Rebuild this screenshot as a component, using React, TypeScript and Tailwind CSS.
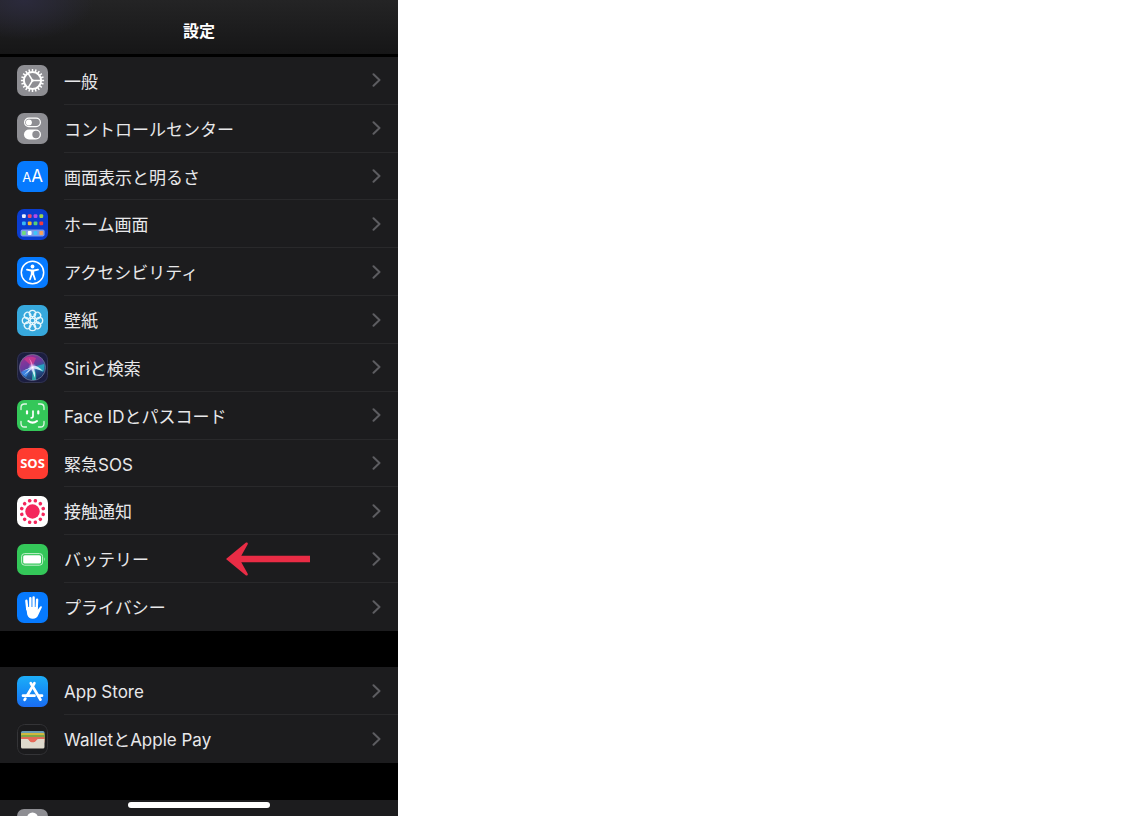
import type { ReactNode } from 'react';

type Item = {
  name: string;
  href: string;
  icon: ReactNode;
  highlighted?: boolean;
};

const angles = (count: number) => Array.from({ length: count }, (_, i) => (i * 360) / count);

const GearIcon = () => (
  <g stroke="#fff" fill="none">
    <circle cx="15.5" cy="15.5" r="8.6" strokeWidth="2" />
    {angles(20).map((a) => (
      <path key={a} d="M15.5 6.5V3.9" strokeWidth="1.5" transform={`rotate(${a} 15.5 15.5)`} />
    ))}
    <path d="M15.5 15.5H24M15.5 15.5L11 8.1M15.5 15.5L11 22.9" strokeWidth="1.5" />
    <circle cx="15.5" cy="15.5" r="1.3" fill="#fff" stroke="none" />
  </g>
);

const ControlsIcon = () => (
  <g>
    <rect x="7.6" y="5.2" width="15.8" height="8.4" rx="4.2" fill="none" stroke="#fff" strokeWidth="1.2" />
    <circle cx="11.9" cy="9.4" r="3" fill="#fff" />
    <rect x="7" y="16.5" width="17" height="10" rx="5" fill="#fff" />
    <circle cx="19" cy="21.5" r="3.7" fill="#8e8e93" />
  </g>
);

const homeDots = [
  ['#e9eefb', '#ef4a6a', '#b44be8', '#9bd34e'],
  ['#38b8f5', '#f8b529', '#55d07a', '#f23b3f'],
];

const HomeIcon = () => (
  <g>
    {homeDots.map((row, y) =>
      row.map((fill, x) => (
        <rect key={`${x}-${y}`} x={5 + x * 5.8} y={5.3 + y * 7.2} width="3.8" height="3.8" rx="1" fill={fill} />
      ))
    )}
    <rect x="3.6" y="20.6" width="24" height="6.8" rx="1.8" fill="#7c9bea" />
    {['#6fdd7e', '#ffffff', '#3fc4fa', '#f5a05b'].map((fill, x) => (
      <rect key={fill} x={5 + x * 5.8} y="22.1" width="3.8" height="3.8" rx="1" fill={fill} />
    ))}
  </g>
);

const AccessibilityIcon = () => (
  <g fill="#fff">
    <circle cx="15.5" cy="15.5" r="11.2" fill="none" stroke="#fff" strokeWidth="1.5" />
    <circle cx="15.5" cy="9.5" r="1.9" />
    <path
      d="M10 12.7L14 13.5H17L21 12.7M14.7 13.5V17.2L13 22.3M16.3 13.5V17.2L18 22.3M15.5 13.5V17"
      fill="none"
      stroke="#fff"
      strokeWidth="1.8"
      strokeLinecap="round"
      strokeLinejoin="round"
    />
  </g>
);

const WallpaperIcon = () => (
  <g fill="none" stroke="#e4f6fc" strokeWidth="1.3">
    {angles(8).map((a) => (
      <circle key={a} cx="15.5" cy="8.5" r="3.2" transform={`rotate(${a} 15.5 15.5)`} />
    ))}
    {angles(8).map((a) => (
      <path key={a} d="M15.5 11.3V13.2" transform={`rotate(${a} 15.5 15.5)`} />
    ))}
    <circle cx="15.5" cy="15.5" r="2.4" />
  </g>
);

const SiriIcon = () => (
  <g>
    <defs>
      <linearGradient id="siri-orb" x1="0.2" y1="0" x2="0.7" y2="1">
        <stop offset="0" stopColor="#a2318f" />
        <stop offset="0.4" stopColor="#6b3aa0" />
        <stop offset="0.65" stopColor="#2a5c9c" />
        <stop offset="1" stopColor="#1b2b5c" />
      </linearGradient>
      <radialGradient id="siri-glow">
        <stop offset="0" stopColor="#fff" />
        <stop offset="0.4" stopColor="#e7d4ff" stopOpacity="0.7" />
        <stop offset="1" stopColor="#9fb0ff" stopOpacity="0" />
      </radialGradient>
    </defs>
    <rect x="0.5" y="0.5" width="30" height="30" rx="7" fill="none" stroke="#34364f" />
    <circle cx="15.5" cy="15.5" r="13" fill="url(#siri-orb)" stroke="#6f7796" strokeWidth="0.8" />
    <path d="M15.5 15L7 7Q12 3 19 6Z" fill="#e0398c" opacity="0.65" />
    <path d="M16 15L27 12Q28 17 26 20Z" fill="#24b8c8" opacity="0.75" />
    <path d="M15 15L4 20Q6 24 9 25Z" fill="#3f8ef0" opacity="0.8" />
    <path d="M16 15Q20 20 19 28L15 28Z" fill="#37d3c0" opacity="0.7" />
    <path d="M5 19Q11 17 15.5 14Q20 13 26 19Q20 17 16.8 16.4Q18.5 20 18 26Q15.5 20 14.5 17Q12 20 7 23Q11 19 13 16.8Q9 18 5 19Z" fill="#e6fbff" opacity="0.85" />
    <path d="M12 6Q15.5 10 16 14.5L14.5 15Q14 10 12 6Z" fill="#ff9ad4" opacity="0.8" />
    <circle cx="15.5" cy="15.5" r="4.5" fill="url(#siri-glow)" />
  </g>
);

const FaceIcon = () => (
  <g fill="none" stroke="#fff" strokeLinecap="round">
    <path
      d="M4 9.5V7.5Q4 4 7.5 4H9.5M21.5 4H23.5Q27 4 27 7.5V9.5M27 21.5V23.5Q27 27 23.5 27H21.5M9.5 27H7.5Q4 27 4 23.5V21.5"
      strokeWidth="1.3"
      opacity="0.85"
    />
    <path d="M10 11.3V13.5M21.3 11.3V13.5" strokeWidth="2.2" />
    <path d="M16 11V16.3Q16 17.8 14.2 17.8" strokeWidth="1.7" />
    <path d="M11.3 21Q15.6 24.3 20 21" strokeWidth="2" />
  </g>
);

const ExposureIcon = () => (
  <g fill="#f4265c">
    <circle cx="15.5" cy="15.5" r="7.2" />
    {angles(12).map((a) => (
      <circle key={a} cx="15.5" cy="4.4" r="1.8" transform={`rotate(${a + 15} 15.5 15.5)`} />
    ))}
  </g>
);

const BatteryIcon = () => (
  <g>
    <rect x="4.6" y="9.6" width="21" height="11.6" rx="3" fill="none" stroke="#c5f0cf" strokeWidth="1" />
    <rect x="6.2" y="11.2" width="17.8" height="8.4" rx="1.6" fill="#fff" />
    <path d="M27 13.2Q28.8 15.4 27 17.6Z" fill="#c5f0cf" />
  </g>
);

const HandIcon = () => (
  <g fill="none" stroke="#fff" strokeLinecap="round">
    <path d="M10.3 17.5L9.4 8.8M13.3 15V6.1M16.6 15V5.5M19.7 16L20.1 7.6" strokeWidth="2.4" />
    <path
      d="M9.2 15H20.8V17.8L23.2 14.6Q24.6 13.7 25 15L21.5 22.4Q19.8 26.8 15.8 26.8Q11.6 26.8 10.2 22.5Z"
      fill="#fff"
      stroke="none"
    />
  </g>
);

const StoreIcon = () => (
  <g stroke="#fff" strokeWidth="2.7" strokeLinecap="round" fill="none">
    <path d="M13.8 7.2L23.5 23.7" />
    <path d="M17.4 7.2L10.3 19.2M8.4 22.6L7.6 23.8" />
    <path d="M6 19.7H17.5M22 19.7H25" />
  </g>
);

const WalletIcon = () => (
  <g>
    <rect x="0.5" y="0.5" width="30" height="30" rx="7" fill="#1b1b1d" stroke="#343437" />
    <rect x="4" y="7" width="23.5" height="8" rx="1.5" fill="#699db5" />
    <rect x="4" y="9" width="23.5" height="7" rx="1" fill="#d0b93c" />
    <rect x="4" y="11" width="23.5" height="6" rx="1" fill="#7da647" />
    <rect x="4" y="13" width="23.5" height="6" rx="1" fill="#df6a56" />
    <path d="M4 15H10.5C12 15 12.2 18.3 15.7 18.3C19.2 18.3 19.5 15 21 15H27.5V23Q27.5 24.5 26 24.5H5.5Q4 24.5 4 23Z" fill="#dfdacd" />
    <path d="M11.3 14.8H20.2C18.9 16 18.9 18.1 15.7 18.1C12.6 18.1 12.5 16 11.3 14.8Z" fill="#e76a5a" />
  </g>
);

// Rounded 31px tile behind every glyph
function Tile({ className, children }: { className: string; children: ReactNode }) {
  return (
    <span className={`block size-[31px] shrink-0 overflow-hidden rounded-[7px] ${className}`}>
      <svg viewBox="0 0 31 31" className="size-full" aria-hidden="true">
        {children}
      </svg>
    </span>
  );
}

function TextTile({ className, children }: { className: string; children: ReactNode }) {
  return (
    <span
      aria-hidden="true"
      className={`flex size-[31px] shrink-0 justify-center rounded-[7px] leading-[31px] text-white ${className}`}
    >
      {children}
    </span>
  );
}

const systemItems: Item[] = [
  { name: '一般', href: '#general', icon: <Tile className="bg-[#8e8e93]"><GearIcon /></Tile> },
  { name: 'コントロールセンター', href: '#control-center', icon: <Tile className="bg-[#8e8e93]"><ControlsIcon /></Tile> },
  {
    name: '画面表示と明るさ',
    href: '#display',
    icon: (
      <TextTile className="items-baseline bg-[#067aff]">
        <span className="text-[13px]">A</span>
        <span className="text-[17px]">A</span>
      </TextTile>
    ),
  },
  { name: 'ホーム画面', href: '#home-screen', icon: <Tile className="bg-[#0a3dd0]"><HomeIcon /></Tile> },
  { name: 'アクセシビリティ', href: '#accessibility', icon: <Tile className="bg-[#067aff]"><AccessibilityIcon /></Tile> },
  { name: '壁紙', href: '#wallpaper', icon: <Tile className="bg-[#37a8dc]"><WallpaperIcon /></Tile> },
  { name: 'Siriと検索', href: '#siri', icon: <Tile className="bg-[#1b1d40]"><SiriIcon /></Tile> },
  { name: 'Face IDとパスコード', href: '#face-id', icon: <Tile className="bg-[#34c759]"><FaceIcon /></Tile> },
  {
    name: '緊急SOS',
    href: '#sos',
    icon: <TextTile className="bg-[#ff3b30] font-['Open_Sans'] text-[13px] font-bold">SOS</TextTile>,
  },
  { name: '接触通知', href: '#exposure', icon: <Tile className="bg-white"><ExposureIcon /></Tile> },
  { name: 'バッテリー', href: '#battery', icon: <Tile className="bg-[#34c759]"><BatteryIcon /></Tile>, highlighted: true },
  { name: 'プライバシー', href: '#privacy', icon: <Tile className="bg-[#067aff]"><HandIcon /></Tile> },
];

const storeItems: Item[] = [
  { name: 'App Store', href: '#app-store', icon: <Tile className="bg-linear-to-b from-[#1eaef8] to-[#1b6cf2]"><StoreIcon /></Tile> },
  { name: 'WalletとApple Pay', href: '#wallet', icon: <Tile className="bg-[#1b1b1d]"><WalletIcon /></Tile> },
];

function Row({ item }: { item: Item }) {
  return (
    <li className="group relative min-h-0">
      <a href={item.href} className="flex h-full items-center gap-4 pl-[17px]">
        {item.icon}
        <span className="flex flex-1 items-center justify-between self-stretch border-b border-[#29292b] pr-[17px] group-last:border-transparent">
          <span className="pt-[3px]">{item.name}</span>
          <svg viewBox="0 0 9 14" className="h-[14px] w-[9px]" fill="none" stroke="#5d5d61" strokeWidth="2" aria-hidden="true">
            <path d="M1.5 1.3L7.5 7L1.5 12.7" strokeLinecap="round" strokeLinejoin="round" />
          </svg>
        </span>
      </a>
      {item.highlighted && (
        <svg
          viewBox="0 0 84 34"
          className="pointer-events-none absolute top-[7px] right-[88px] h-[34px] w-[84px]"
          fill="#e92c45"
          aria-hidden="true"
        >
          <path d="M0 17L20 0.6Q22.5 0 21.6 2.6L15.3 13.7H84V20.3H15.3L21.6 31.4Q22.5 34 20 33.4Z" />
        </svg>
      )}
    </li>
  );
}

export default function App() {
  return (
    <main className="relative flex h-screen w-full max-w-[398px] flex-col overflow-hidden bg-black font-['Inter','Noto_Sans_CJK_JP',sans-serif] text-[17px] leading-6 text-[#e8e8ea]">
      <header className="flex h-[54px] shrink-0 items-center justify-center bg-[radial-gradient(ellipse_70px_40px_at_24px_0px,#2b2a3c,transparent),linear-gradient(#242425,#161617)] pt-2">
        <h1 className="text-[16px] font-bold text-white">設定</h1>
      </header>

      <ul className="mt-[3px] grid h-[574px] shrink-0 auto-rows-fr bg-[#1c1c1e]">
        {systemItems.map((item) => (
          <Row key={item.name} item={item} />
        ))}
      </ul>

      <ul className="mt-9 grid h-24 shrink-0 auto-rows-fr bg-[#1c1c1e]">
        {storeItems.map((item) => (
          <Row key={item.name} item={item} />
        ))}
      </ul>

      {/* Next group, only its top edge is in view */}
      <div className="mt-[37px] h-12 shrink-0 bg-[#1c1c1e] pt-[9px] pl-[17px]">
        <Tile className="bg-[#8e8e93]">
          <circle cx="15.5" cy="9" r="5.5" fill="#fff" />
        </Tile>
      </div>

      {/* Home indicator */}
      <div className="absolute inset-x-0 bottom-2 mx-auto h-[6px] w-[142px] rounded-full bg-white" />
    </main>
  );
}
